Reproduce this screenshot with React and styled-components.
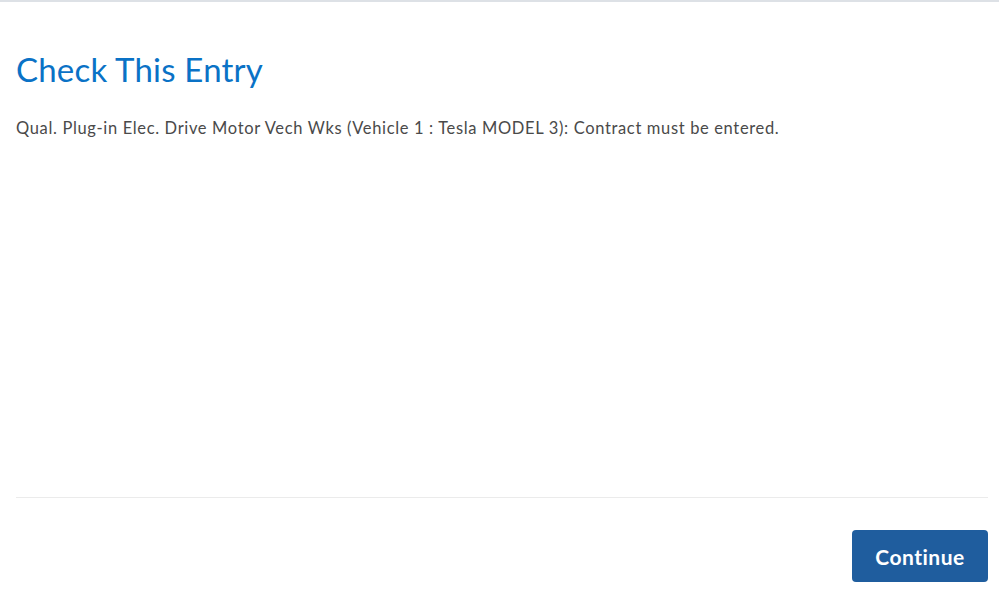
import React from "react";
import styled, { createGlobalStyle } from "styled-components";

const GlobalStyle = createGlobalStyle`
  html, body {
    margin: 0;
    padding: 0;
    background: #ffffff;
  }
  body {
    font-family: Lato, "Noto Sans", "Liberation Sans", sans-serif;
  }
`;

const Page = styled.div`
  width: 999px;
  height: 612px;
  box-sizing: border-box;
  border-top: 2px solid #dde1e6;
  display: flex;
  flex-direction: column;
  padding: 0 11px 0 16px;
`;

const Body = styled.div`
  flex: 1;
  display: flex;
  flex-direction: column;
`;

const Title = styled.h1`
  margin: 47px 0 0;
  font-size: 33px;
  font-weight: 400;
  letter-spacing: 0.2px;
  line-height: 40px;
  color: #0a72c6;
`;

const Message = styled.p`
  margin: 28px 0 0;
  font-size: 16.5px;
  letter-spacing: 0.65px;
  line-height: 22px;
  color: #4a4a4a;
`;

const Footer = styled.div`
  border-top: 1px solid #ebebeb;
  height: 115px;
  box-sizing: border-box;
  display: flex;
  justify-content: flex-end;
  align-items: flex-start;
  padding-top: 32px;
`;

const Button = styled.button`
  width: 136px;
  height: 52px;
  border: none;
  border-radius: 4px;
  background: #1f5d9e;
  color: #ffffff;
  font-family: Lato, "Noto Sans", "Liberation Sans", sans-serif;
  font-size: 21px;
  font-weight: 700;
  letter-spacing: 0.5px;
  cursor: pointer;
`;

export default function App() {
  return (
    <>
      <GlobalStyle />
      <Page>
        <Body>
          <Title>Check This Entry</Title>
          <Message>
            Qual. Plug-in Elec. Drive Motor Vech Wks (Vehicle 1 : Tesla MODEL
            3): Contract must be entered.
          </Message>
        </Body>
        <Footer>
          <Button>Continue</Button>
        </Footer>
      </Page>
    </>
  );
}
